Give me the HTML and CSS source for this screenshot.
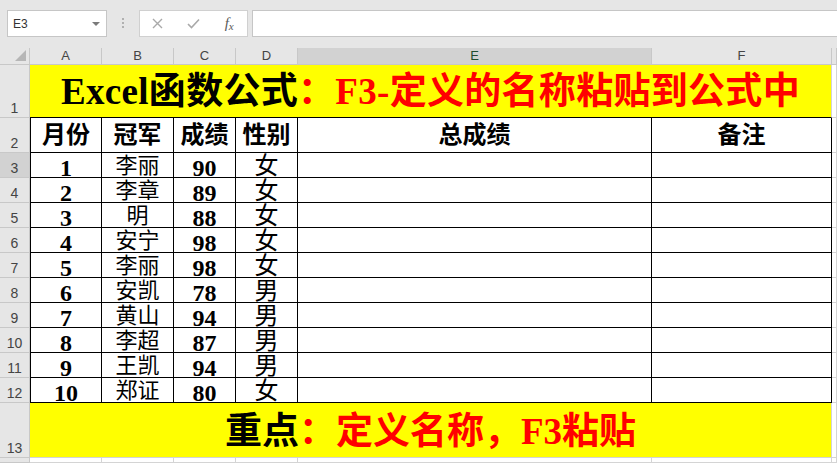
FILE: index.html
```html
<!DOCTYPE html>
<html lang="zh-CN">
<head>
  <meta charset="UTF-8">
  <title>Excel函数公式</title>
  <link rel="stylesheet" href="styles.css">
</head>
<body>
<div class="formula-bar">
  <div class="name-box"><span>E3</span><span class="arrow"></span></div>
  <div class="grip"><i></i><i></i><i></i></div>
  <div class="fx-btns">
    <span class="slot">
      <svg width="11" height="11" viewBox="0 0 11 11"><path d="M1 1 L10 10 M10 1 L1 10" stroke="#a9a9a9" stroke-width="1.4" fill="none"/></svg>
    </span>
    <span class="slot">
      <svg width="13" height="11" viewBox="0 0 13 11"><path d="M1 6 L4.5 9.5 L12 1.5" stroke="#a9a9a9" stroke-width="1.6" fill="none"/></svg>
    </span>
    <span class="slot fx"><i>f</i><i class="x">x</i></span>
  </div>
  <div class="formula-input"></div>
</div>

<div class="sheet">
  <!-- 列标 -->
  <div class="corner"><span class="tri"></span></div>
  <div class="colhdr">A</div>
  <div class="colhdr">B</div>
  <div class="colhdr">C</div>
  <div class="colhdr">D</div>
  <div class="colhdr sel">E</div>
  <div class="colhdr">F</div>
  <div class="colhdr"></div>

  <!-- 第1行 标题 -->
  <div class="rowhdr">1</div>
  <div class="cell banner title"><span>Excel函数公式</span><span class="red">：F3-定义的名称粘贴到公式中</span></div>
  <div class="cell"></div>

  <!-- 第2行 表头 -->
  <div class="rowhdr">2</div>
  <div class="cell b first head">月份</div>
  <div class="cell b head">冠军</div>
  <div class="cell b head">成绩</div>
  <div class="cell b head">性别</div>
  <div class="cell b head">总成绩</div>
  <div class="cell b head">备注</div>
  <div class="cell"></div>

  <div class="rowhdr sel">3</div>
  <div class="cell b first num">1</div><div class="cell b name">李丽</div><div class="cell b num">90</div><div class="cell b sex">女</div>
  <div class="cell b"></div><div class="cell b"></div><div class="cell"></div>

  <div class="rowhdr">4</div>
  <div class="cell b first num">2</div><div class="cell b name">李章</div><div class="cell b num">89</div><div class="cell b sex">女</div>
  <div class="cell b"></div><div class="cell b"></div><div class="cell"></div>

  <div class="rowhdr">5</div>
  <div class="cell b first num">3</div><div class="cell b name">明</div><div class="cell b num">88</div><div class="cell b sex">女</div>
  <div class="cell b"></div><div class="cell b"></div><div class="cell"></div>

  <div class="rowhdr">6</div>
  <div class="cell b first num">4</div><div class="cell b name">安宁</div><div class="cell b num">98</div><div class="cell b sex">女</div>
  <div class="cell b"></div><div class="cell b"></div><div class="cell"></div>

  <div class="rowhdr">7</div>
  <div class="cell b first num">5</div><div class="cell b name">李丽</div><div class="cell b num">98</div><div class="cell b sex">女</div>
  <div class="cell b"></div><div class="cell b"></div><div class="cell"></div>

  <div class="rowhdr">8</div>
  <div class="cell b first num">6</div><div class="cell b name">安凯</div><div class="cell b num">78</div><div class="cell b sex">男</div>
  <div class="cell b"></div><div class="cell b"></div><div class="cell"></div>

  <div class="rowhdr">9</div>
  <div class="cell b first num">7</div><div class="cell b name">黄山</div><div class="cell b num">94</div><div class="cell b sex">男</div>
  <div class="cell b"></div><div class="cell b"></div><div class="cell"></div>

  <div class="rowhdr">10</div>
  <div class="cell b first num">8</div><div class="cell b name">李超</div><div class="cell b num">87</div><div class="cell b sex">男</div>
  <div class="cell b"></div><div class="cell b"></div><div class="cell"></div>

  <div class="rowhdr">11</div>
  <div class="cell b first num">9</div><div class="cell b name">王凯</div><div class="cell b num">94</div><div class="cell b sex">男</div>
  <div class="cell b"></div><div class="cell b"></div><div class="cell"></div>

  <div class="rowhdr">12</div>
  <div class="cell b first num">10</div><div class="cell b name">郑证</div><div class="cell b num">80</div><div class="cell b sex">女</div>
  <div class="cell b"></div><div class="cell b"></div><div class="cell"></div>

  <!-- 第13行 重点 -->
  <div class="rowhdr">13</div>
  <div class="cell banner"><span>重点</span><span class="red">：定义名称，F3粘贴</span></div>
  <div class="cell"></div>

  <div class="rowhdr"></div>
  <div class="cell"></div><div class="cell"></div><div class="cell"></div><div class="cell"></div>
  <div class="cell"></div><div class="cell"></div><div class="cell"></div>
</div>
</body>
</html>
```

FILE: styles.css
```css
body {
  margin: 0;
  width: 837px;
  height: 463px;
  overflow: hidden;
  background-color: #e6e6e6;
  font-family: "Liberation Sans", "Noto Sans CJK SC", sans-serif;
}

.formula-bar {
  display: flex;
  align-items: flex-start;
  height: 48px;
  padding: 10px 0 0 7px;
  box-sizing: border-box;
}

.name-box {
  width: 100px;
  height: 27px;
  box-sizing: border-box;
  background-color: #fff;
  border: 1px solid #c6c6c6;
  display: flex;
  align-items: center;
  justify-content: space-between;
  padding: 0 6px 0 5px;
  font-size: 12px;
  color: #333;
}

.name-box .arrow {
  border-left: 4px solid transparent;
  border-right: 4px solid transparent;
  border-top: 4px solid #7a7a7a;
}

.grip {
  width: 32px;
  display: flex;
  flex-direction: column;
  align-items: center;
  gap: 2px;
  padding-top: 8px;
}

.grip i {
  width: 2px;
  height: 2px;
  background-color: #b0b0b0;
}

.fx-btns {
  width: 109px;
  height: 27px;
  box-sizing: border-box;
  background-color: #fff;
  border: 1px solid #d0d0d0;
  display: flex;
  align-items: center;
}

.fx-btns .slot {
  width: 36px;
  display: flex;
  justify-content: center;
  align-items: center;
}

.fx-btns .fx {
  font-family: "Liberation Serif", serif;
  font-style: italic;
  font-size: 15px;
  color: #5a5a5a;
}

.fx-btns .fx .x {
  font-size: 11px;
  margin-top: 4px;
}

.formula-input {
  flex: 1;
  height: 27px;
  margin-left: 4px;
  box-sizing: border-box;
  background-color: #fff;
  border: 1px solid #c6c6c6;
  border-right: none;
}

.sheet {
  display: grid;
  grid-template-columns: 30px 72px 72px 62px 62px 354px 180px 1fr;
  grid-template-rows: 17px 53px 35px repeat(10, 25px) 55px 1fr;
  height: 415px;
  background-color: #fff;
}

.corner, .colhdr, .rowhdr {
  background-color: #e6e6e6;
  box-sizing: border-box;
  border-right: 1px solid #c8c8c8;
  border-bottom: 1px solid #c8c8c8;
  color: #444;
}

.corner {
  display: flex;
  justify-content: flex-end;
  align-items: flex-end;
  padding: 0 3px 3px 0;
}

.corner .tri {
  border-left: 11px solid transparent;
  border-bottom: 11px solid #b6b6b6;
}

.colhdr {
  font-size: 13px;
  line-height: 16px;
  text-align: center;
}

.colhdr.sel {
  background-color: #d2d2d2;
  color: #1f4d30;
}

.rowhdr {
  display: flex;
  align-items: flex-end;
  justify-content: center;
  font-size: 14px;
  line-height: 16px;
  padding-bottom: 1px;
}

.rowhdr.sel {
  background-color: #d2d2d2;
}

.cell {
  box-sizing: border-box;
  border-right: 1px solid #d4d4d4;
  border-bottom: 1px solid #d4d4d4;
  background-color: #fff;
  display: flex;
  align-items: flex-end;
  justify-content: center;
  white-space: nowrap;
  font-family: "Liberation Serif", "Noto Sans CJK SC", serif;
  color: #000;
}

.cell.b {
  border-right-color: #000;
  border-bottom-color: #000;
}

.cell.first {
  border-left: 1px solid #000;
}

.banner {
  grid-column: span 6;
  background-color: #ffff00;
  font-size: 37px;
  font-weight: bold;
  line-height: 40px;
  padding-bottom: 5px;
}

.banner.title {
  border-bottom-color: #000;
  letter-spacing: 0.3px;
}

.red {
  color: #ff0000;
}

.head {
  align-items: center;
  font-size: 24px;
  font-weight: bold;
  line-height: 30px;
}

.num {
  font-size: 24px;
  font-weight: bold;
  line-height: 18px;
}

.name {
  font-size: 22px;
  line-height: 22px;
}

.sex {
  font-size: 24px;
  line-height: 22px;
}
```
